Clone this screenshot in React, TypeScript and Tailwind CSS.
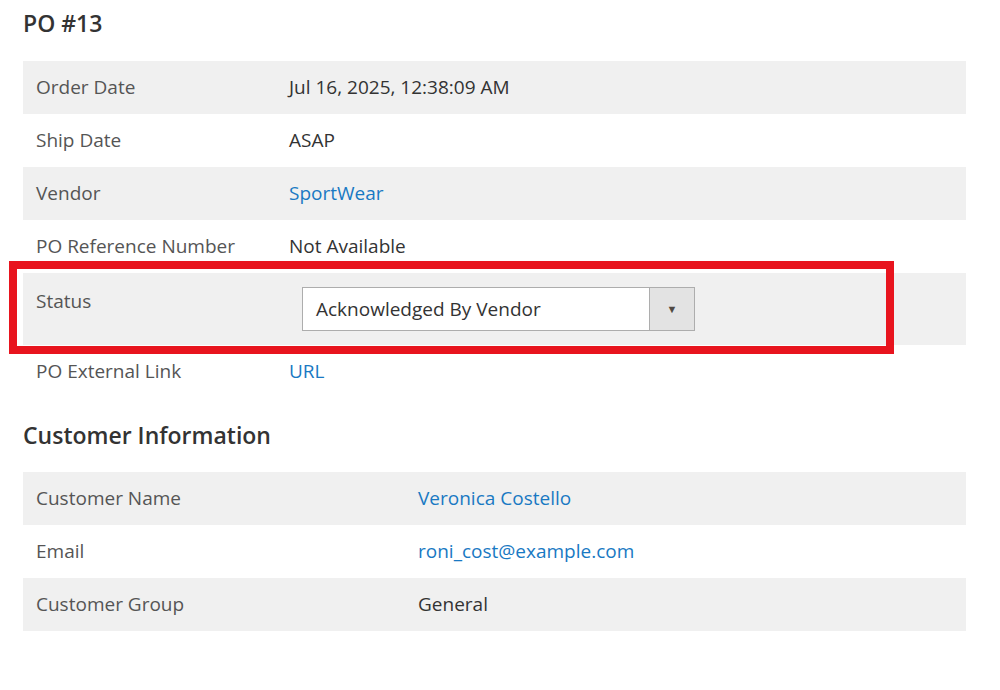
import React from 'react';

const Row = ({ label, children, grey, col }: { label: string; children: React.ReactNode; grey?: boolean; col: string }) => (
  <div className={`flex items-center h-[53px] ${grey ? 'bg-[#f0f0f0]' : ''}`}>
    <div className={`pl-[13px] ${col} shrink-0 text-[#555]`}>{label}</div>
    <div className="text-[#333]">{children}</div>
  </div>
);

const Link = ({ children }: { children: React.ReactNode }) => <span className="text-[#1979c3]">{children}</span>;

export default function App() {
  return (
    <div className="relative w-[1000px] h-[690px] bg-white text-[19px]" style={{ fontFamily: '"Open Sans", "Noto Sans", sans-serif' }}>
      <div className="pl-[23px] pr-[34px] pt-[6px]">
        <h1 className="text-[23px] font-semibold text-[#333] h-[55px] leading-[34px]">PO #13</h1>
        <div>
          <Row grey label="Order Date" col="w-[266px]">Jul 16, 2025, 12:38:09 AM</Row>
          <Row label="Ship Date" col="w-[266px]">ASAP</Row>
          <Row grey label="Vendor" col="w-[266px]"><Link>SportWear</Link></Row>
          <Row label="PO Reference Number" col="w-[266px]">Not Available</Row>
          <div className="flex items-start h-[72px] bg-[#f0f0f0] pt-[14px]">
            <div className="pl-[13px] w-[279px] shrink-0 text-[#555]">Status</div>
            <div className="flex h-[44px] w-[393px] border border-[#adadad] bg-white">
              <div className="flex-1 flex items-center pl-[13px] text-[#333]">Acknowledged By Vendor</div>
              <div className="w-[45px] border-l border-[#adadad] bg-[#e3e3e3] flex items-center justify-center text-[#514943] text-[11px]">▼</div>
            </div>
          </div>
          <Row label="PO External Link" col="w-[266px]"><Link>URL</Link></Row>
        </div>
        <h2 className="text-[23px] font-semibold text-[#333] mt-[20px] h-[54px] leading-[34px]">Customer Information</h2>
        <div>
          <Row grey label="Customer Name" col="w-[395px]"><Link>Veronica Costello</Link></Row>
          <Row label="Email" col="w-[395px]"><Link>roni_cost@example.com</Link></Row>
          <Row grey label="Customer Group" col="w-[395px]">General</Row>
        </div>
      </div>
      <div className="absolute left-[9px] top-[261px] w-[885px] h-[93px] border-[8px] border-[#e8141e]" />
    </div>
  );
}
